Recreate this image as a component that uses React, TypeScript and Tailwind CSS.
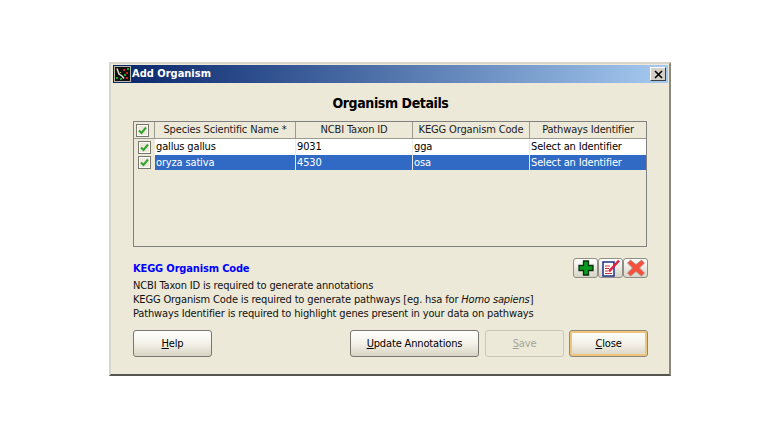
const fontStack = "font-['DejaVu_Sans_Condensed','DejaVu_Sans',sans-serif] tracking-[-0.15px]";

function Check() {
  return (
    <span className="flex h-[13px] w-[13px] items-center justify-center border border-[#77776f] bg-[#ece9d8] shadow-[inset_0_0_0_1px_#fff]">
      <svg width="9" height="9" viewBox="0 0 9 9">
        <path d="M1 4.5 L3.5 7 L8 1.5" fill="none" stroke="#2fa52f" strokeWidth="2" />
      </svg>
    </span>
  );
}

function AppIcon() {
  return (
    <svg width="17" height="16" viewBox="0 0 17 16" className="shrink-0">
      <rect x="0.5" y="0.5" width="16" height="15" fill="#101010" stroke="#b9b8a8" />
      <path d="M3 2.5 L5 8 L8 10 L10 12.5" fill="none" stroke="#d8e0c8" strokeWidth="1.5" />
      <path d="M5 8 L7 6" fill="none" stroke="#c8b060" strokeWidth="1" />
      <rect x="9" y="3" width="2" height="2" fill="#c82020" />
      <rect x="12" y="6" width="2" height="2" fill="#c82020" />
      <rect x="12" y="11" width="2" height="2" fill="#c82020" />
      <rect x="2" y="11" width="2" height="2" fill="#20a030" />
      <rect x="6" y="12" width="2" height="2" fill="#20a030" />
      <rect x="10" y="8" width="2" height="2" fill="#20a030" />
      <rect x="13" y="2" width="2" height="2" fill="#20a030" />
    </svg>
  );
}

function WinButton({
  hotkey,
  rest,
  className,
  disabled,
  focused,
}: {
  hotkey: string;
  rest: string;
  className: string;
  disabled?: boolean;
  focused?: boolean;
}) {
  return (
    <button
      className={`flex h-[27px] items-center justify-center rounded-[3px] border text-[11px] ${className} ${
        disabled
          ? 'border-[#c9c7ba] bg-[#ece9d8] text-[#a5a597]'
          : focused
            ? 'border-[#8a8878] bg-gradient-to-b from-[#ffffff] via-[#f3f1e8] to-[#d8d4c4] text-black shadow-[inset_0_0_0_2px_#f0c57a]'
            : 'border-[#77776f] bg-gradient-to-b from-[#ffffff] via-[#f3f1e8] to-[#d8d4c4] text-black'
      }`}
    >
      <span>
        <span className="underline">{hotkey}</span>
        {rest}
      </span>
    </button>
  );
}

function IconButton({ children }: { children: React.ReactNode }) {
  return (
    <span className="flex h-5 w-[25px] items-center justify-center rounded-[3px] border border-[#8f8f85] bg-gradient-to-b from-[#ffffff] to-[#d8d4c4]">
      {children}
    </span>
  );
}

const cols = ['w-[141px]', 'w-[117px]', 'w-[117px]', 'flex-1'];
const headers = ['Species Scientific Name *', 'NCBI Taxon ID', 'KEGG Organism Code', 'Pathways Identifier'];
const rows = [
  { values: ['gallus gallus', '9031', 'gga', 'Select an Identifier'], selected: false },
  { values: ['oryza sativa', '4530', 'osa', 'Select an Identifier'], selected: true },
];

export default function App() {
  return (
    <div className={`flex h-[439px] w-[780px] items-center justify-center bg-white pb-px text-[11px] leading-[14px] ${fontStack}`}>
      <div className="flex h-[314px] w-[562px] flex-col border-t-2 border-r-2 border-b-2 border-l-2 border-t-[#d8d6cc] border-r-[#8a897f] border-b-[#55544e] border-l-[#d8d6cc] bg-[#ece9d8] pt-px pr-px pl-[2px]">
        <div className="flex h-[18px] shrink-0 items-center bg-gradient-to-r from-[#0a246a] to-[#a6caf0] pr-[2px] pl-px">
          <AppIcon />
          <span className="ml-px text-[11px] font-bold tracking-normal text-white">Add Organism</span>
          <span className="ml-auto flex h-[14px] w-[16px] items-center justify-center border border-t-white border-r-[#404040] border-b-[#404040] border-l-white bg-[#d4d0c8]">
            <svg width="9" height="9" viewBox="0 0 9 9">
              <path d="M1 1 L8 8 M8 1 L1 8" stroke="#000" strokeWidth="1.6" />
            </svg>
          </span>
        </div>

        <div className="flex flex-1 flex-col px-[20px]">
          <h1 className="mt-[11px] h-[18px] text-center text-[14px] leading-[18px] font-bold tracking-[-0.4px] text-black">Organism Details</h1>

          <div className="mt-[9px] h-[126px] w-[514px] border border-[#808080] bg-[#ece9d8]">
            <div className="flex h-[17px] border-b border-[#9a9a90] bg-[#ece9d8]">
              <div className="flex w-[21px] items-center justify-center border-r border-[#9a9a90] pr-[3px]">
                <Check />
              </div>
              {headers.map((h, i) => (
                <div key={h} className={`${cols[i]} border-r border-[#9a9a90] text-center leading-[16px] whitespace-nowrap text-[#1c1c1c] last:border-r-0`}>
                  {h}
                </div>
              ))}
            </div>
            {rows.map((row) => (
              <div key={row.values[0]} className={`flex ${row.selected ? 'h-[15px] bg-[#316ac5] text-white' : 'h-[16px] bg-white text-black'}`}>
                <div className="flex w-[21px] items-center justify-center bg-[#ece9d8]">
                  <Check />
                </div>
                {row.values.map((v, i) => (
                  <div key={i} className={`${cols[i]} border-r border-[#e8e8e8] pl-px leading-[15px] last:border-r-0`}>
                    {v}
                  </div>
                ))}
              </div>
            ))}
          </div>

          <div className="mt-[11px] flex h-[20px] items-center justify-between">
            <span className="mt-[1px] text-[11px] font-bold text-[#0000ff]">KEGG Organism Code</span>
            <div className="flex">
              <IconButton>
                <svg width="18" height="18" viewBox="0 0 18 18">
                  <path d="M6.5 2 H11.5 V6.5 H16 V11.5 H11.5 V16 H6.5 V11.5 H2 V6.5 H6.5 Z" fill="#0a9a1c" stroke="#06300c" strokeWidth="1.3" />
                </svg>
              </IconButton>
              <IconButton>
                <svg width="21" height="18" viewBox="0 0 21 18">
                  <rect x="3" y="3" width="11" height="14" fill="#fff" stroke="#1c2f8c" strokeWidth="1.5" />
                  <path d="M5 7 H10 M5 9.5 H9 M5 12 H8 M5 14.5 H12" stroke="#d63030" strokeWidth="1" />
                  <path d="M9 12.5 L19 1.5" stroke="#e0203c" strokeWidth="2.6" />
                </svg>
              </IconButton>
              <IconButton>
                <svg width="20" height="18" viewBox="0 0 20 18">
                  <path d="M4.5 1 L10 5.5 L15.5 1 L18.5 4 L13.5 9 L18.5 14 L15.5 17 L10 12.5 L4.5 17 L1.5 14 L6.5 9 L1.5 4 Z" fill="#f4503c" stroke="#a88e88" strokeWidth="0.8" />
                </svg>
              </IconButton>
            </div>
          </div>

          <div className="mt-[1px] text-[#111]">
            <p>NCBI Taxon ID is required to generate annotations</p>
            <p>
              KEGG Organism Code is required to generate pathways [eg. hsa for <em>Homo sapiens</em>]
            </p>
            <p>Pathways Identifier is required to highlight genes present in your data on pathways</p>
          </div>

          <div className="mt-[9px] flex">
            <WinButton hotkey="H" rest="elp" className="w-[79px]" />
            <WinButton hotkey="U" rest="pdate Annotations" className="ml-[138px] w-[129px]" />
            <WinButton hotkey="S" rest="ave" className="ml-[6px] w-[79px]" disabled />
            <WinButton hotkey="C" rest="lose" className="ml-[5px] w-[79px]" focused />
          </div>
        </div>
      </div>
    </div>
  );
}
